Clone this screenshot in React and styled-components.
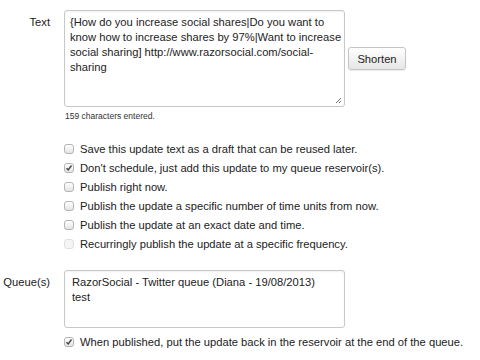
import React from "react"
import styled, { createGlobalStyle } from "styled-components"

const Global = createGlobalStyle`
  body {
    margin: 0;
    background: #fff;
    font-family: "Liberation Sans", Arial, sans-serif;
    color: #222;
  }
`

const Form = styled.div`
  width: 480px;
  height: 360px;
  overflow: hidden;
  padding-top: 10px;
  box-sizing: border-box;
`

const Row = styled.div`
  display: grid;
  grid-template-columns: 64px 1fr;
  margin-top: ${p => p.top || 0}px;
`

const Label = styled.div`
  font-size: 11.2px;
  text-align: right;
  padding-right: 14px;
  padding-top: 6px;
`

const Field = styled.div`
  display: flex;
  align-items: center;
  gap: 3px;
`

const Box = styled.div`
  width: 281px;
  height: ${p => p.h}px;
  box-sizing: border-box;
  border: 1px solid #c8c8c8;
  border-radius: 3px;
  padding: ${p => p.pad || "4px 5px"};
  font-size: 11.2px;
  line-height: 15px;
  color: #222;
  white-space: pre;
  position: relative;
  box-shadow: inset 0 1px 2px rgba(0,0,0,0.06);
`

const Grip = styled.svg`
  position: absolute;
  right: 2px;
  bottom: 2px;
`

const Button = styled.button`
  font-family: "Liberation Sans", Arial, sans-serif;
  font-size: 11.2px;
  color: #222;
  width: 58px;
  height: 23px;
  padding: 0;
  border: 1px solid #c4c4c4;
  border-radius: 3px;
  background: linear-gradient(#fff, #e6e6e6);
  box-shadow: 0 1px 1px rgba(0,0,0,0.08);
`

const Hint = styled.div`
  font-size: 8.5px;
  color: #333;
  padding-left: 1px;
  margin-top: 4px;
`

const Checks = styled.div`
  display: flex;
  flex-direction: column;
  gap: 5px;
`

const Check = styled.label`
  display: flex;
  align-items: center;
  gap: 6px;
  font-size: 11.2px;
  height: 14px;
  white-space: nowrap;
  color: #222;
`

const Tick = styled.span`
  width: 10px;
  height: 10px;
  box-sizing: border-box;
  border: 1px solid ${p => (p.disabled ? "#e0e0e0" : "#b4b4b4")};
  border-radius: 3px;
  background: ${p => (p.disabled ? "#f4f4f4" : "linear-gradient(#fff, #e4e4e4)")};
  display: flex;
  align-items: center;
  justify-content: center;
  flex-shrink: 0;
`

const CheckBox = ({ checked, disabled, children }) => (
  <Check>
    <Tick disabled={disabled}>
      {checked && (
        <svg width="8" height="8" viewBox="0 0 8 8">
          <path d="M1.5 4.2 L3.2 6 L6.5 1.5" fill="none" stroke="#444" strokeWidth="1.4" />
        </svg>
      )}
    </Tick>
    {children}
  </Check>
)

const textLines = [
  "{How do you increase social shares|Do you want to",
  "know how to increase shares by 97%|Want to increase",
  "social sharing] http://www.razorsocial.com/social-",
  "sharing",
]

export default function App() {
  return (
    <>
      <Global />
      <Form>
        <Row>
          <Label>Text</Label>
          <div>
            <Field>
              <Box h={97}>
                {textLines.join("\n")}
                <Grip width="7" height="7" viewBox="0 0 7 7">
                  <path d="M1 6 L6 1 M4 6 L6 4" stroke="#777" strokeWidth="1" />
                </Grip>
              </Box>
              <Button>Shorten</Button>
            </Field>
            <Hint>159 characters entered.</Hint>
          </div>
        </Row>
        <Row top={21}>
          <div />
          <Checks>
            <CheckBox>Save this update text as a draft that can be reused later.</CheckBox>
            <CheckBox checked>Don't schedule, just add this update to my queue reservoir(s).</CheckBox>
            <CheckBox>Publish right now.</CheckBox>
            <CheckBox>Publish the update a specific number of time units from now.</CheckBox>
            <CheckBox>Publish the update at an exact date and time.</CheckBox>
            <CheckBox disabled>Recurringly publish the update at a specific frequency.</CheckBox>
          </Checks>
        </Row>
        <Row top={19}>
          <Label>Queue(s)</Label>
          <div>
            <Box h={58} pad="4px 7px">
              {"RazorSocial - Twitter queue (Diana - 19/08/2013)\ntest"}
            </Box>
          </div>
        </Row>
        <Row top={7}>
          <div />
          <Checks>
            <CheckBox checked>When published, put the update back in the reservoir at the end of the queue.</CheckBox>
          </Checks>
        </Row>
      </Form>
    </>
  )
}
